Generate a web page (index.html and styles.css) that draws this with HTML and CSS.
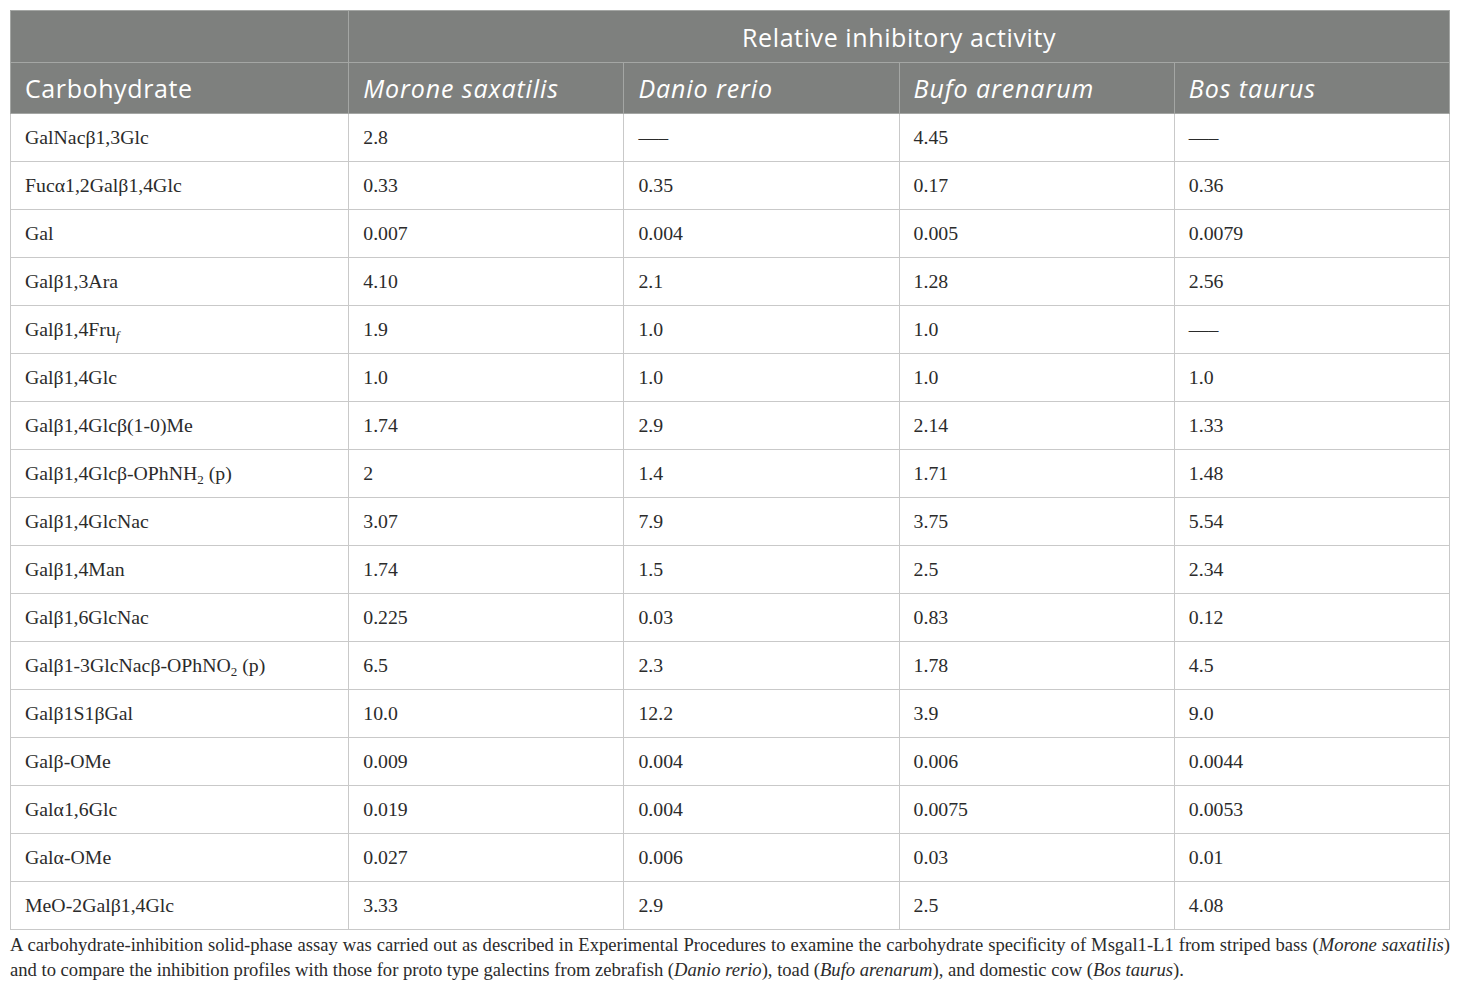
FILE: index.html
```html
<!DOCTYPE html>
<html>
<head>
<meta charset="utf-8">
<link rel="stylesheet" href="styles.css">
</head>
<body>
<div class="wrap">
<table class="tbl">
  <colgroup>
    <col class="c1"><col class="cn"><col class="cn"><col class="cn"><col class="cn">
  </colgroup>
  <thead>
    <tr class="h1"><th></th><th colspan="4" class="center">Relative inhibitory activity</th></tr>
    <tr class="h2"><th>Carbohydrate</th><th><i>Morone saxatilis</i></th><th><i>Danio rerio</i></th><th><i>Bufo arenarum</i></th><th><i>Bos taurus</i></th></tr>
  </thead>
  <tbody>
    <tr><td>GalNacβ1,3Glc</td><td>2.8</td><td>—–</td><td>4.45</td><td>—–</td></tr>
    <tr><td>Fucα1,2Galβ1,4Glc</td><td>0.33</td><td>0.35</td><td>0.17</td><td>0.36</td></tr>
    <tr><td>Gal</td><td>0.007</td><td>0.004</td><td>0.005</td><td>0.0079</td></tr>
    <tr><td>Galβ1,3Ara</td><td>4.10</td><td>2.1</td><td>1.28</td><td>2.56</td></tr>
    <tr><td>Galβ1,4Fru<sub><i>f</i></sub></td><td>1.9</td><td>1.0</td><td>1.0</td><td>—–</td></tr>
    <tr><td>Galβ1,4Glc</td><td>1.0</td><td>1.0</td><td>1.0</td><td>1.0</td></tr>
    <tr><td>Galβ1,4Glcβ(1-0)Me</td><td>1.74</td><td>2.9</td><td>2.14</td><td>1.33</td></tr>
    <tr><td>Galβ1,4Glcβ-OPhNH<sub>2</sub> (p)</td><td>2</td><td>1.4</td><td>1.71</td><td>1.48</td></tr>
    <tr><td>Galβ1,4GlcNac</td><td>3.07</td><td>7.9</td><td>3.75</td><td>5.54</td></tr>
    <tr><td>Galβ1,4Man</td><td>1.74</td><td>1.5</td><td>2.5</td><td>2.34</td></tr>
    <tr><td>Galβ1,6GlcNac</td><td>0.225</td><td>0.03</td><td>0.83</td><td>0.12</td></tr>
    <tr><td>Galβ1-3GlcNacβ-OPhNO<sub>2</sub> (p)</td><td>6.5</td><td>2.3</td><td>1.78</td><td>4.5</td></tr>
    <tr><td>Galβ1S1βGal</td><td>10.0</td><td>12.2</td><td>3.9</td><td>9.0</td></tr>
    <tr><td>Galβ-OMe</td><td>0.009</td><td>0.004</td><td>0.006</td><td>0.0044</td></tr>
    <tr><td>Galα1,6Glc</td><td>0.019</td><td>0.004</td><td>0.0075</td><td>0.0053</td></tr>
    <tr><td>Galα-OMe</td><td>0.027</td><td>0.006</td><td>0.03</td><td>0.01</td></tr>
    <tr><td>MeO-2Galβ1,4Glc</td><td>3.33</td><td>2.9</td><td>2.5</td><td>4.08</td></tr>
  </tbody>
</table>
<p class="note">A carbohydrate-inhibition solid-phase assay was carried out as described in Experimental Procedures to examine the carbohydrate specificity of Msgal1-L1 from striped bass (<i>Morone saxatilis</i>) and to compare the inhibition profiles with those for proto type galectins from zebrafish (<i>Danio rerio</i>), toad (<i>Bufo arenarum</i>), and domestic cow (<i>Bos taurus</i>).</p>
</div>
</body>
</html>
```

FILE: styles.css
```css
html, body {
  margin: 0;
  padding: 0;
  background: #ffffff;
}
.wrap {
  padding: 10px 11px 0 10px;
}
.tbl {
  width: 1440px;
  border-collapse: collapse;
  table-layout: fixed;
}
.c1 { width: 338px; }
.cn { width: 275px; }
.tbl th {
  background: #7e807e;
  color: #ffffff;
  font-family: "Open Sans", "DejaVu Sans", sans-serif;
  font-weight: 400;
  font-size: 25px;
  letter-spacing: 0.6px;
  text-align: left;
  padding: 0 14px;
  border: 1px solid #a4a6a4;
}
.tbl th i { font-style: italic; letter-spacing: 0.9px; }
.tbl .h1 th { height: 51px; }
.tbl .h2 th { height: 50px; }
.tbl th.center { text-align: center; }
.tbl td {
  font-family: "Liberation Serif", "Times New Roman", serif;
  font-size: 19.8px;
  color: #2b2b2b;
  height: 47px;
  padding: 0 14px;
  border: 1px solid #c9c9c9;
  vertical-align: middle;
}
.tbl sub {
  font-size: 13px;
  line-height: 0;
  vertical-align: -4px;
}
.note {
  margin: 2px 0 0 0;
  width: 1440px;
  font-family: "Liberation Serif", "Times New Roman", serif;
  font-size: 18.6px;
  line-height: 25px;
  color: #2b2b2b;
  text-align: justify;
}
```
